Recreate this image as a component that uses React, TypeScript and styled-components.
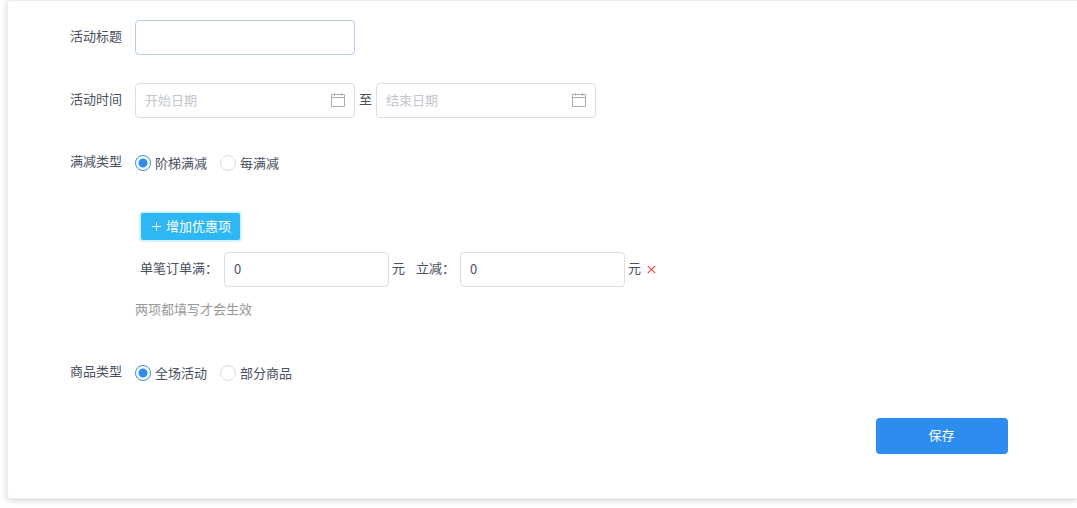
import React, { useState } from "react";
import styled, { createGlobalStyle } from "styled-components";

const GlobalStyle = createGlobalStyle`
  *, *::before, *::after { box-sizing: border-box; }
  body {
    margin: 0;
    background: #fff;
    color: #495060;
    font-family: "Noto Sans CJK SC", sans-serif;
    font-size: 13px;
    line-height: 20px;
  }
  input, button { font: inherit; color: inherit; margin: 0; }
`;

const Card = styled.form`
  margin: 0 0 8px 7px;
  padding: 19px 69px 44px 0;
  border: 1px solid #eee;
  border-right: 0;
  border-radius: 4px 0 0 4px;
  background: #fff;
  box-shadow: 0 1px 6px rgba(0, 0, 0, 0.2);
`;

const Row = styled.div<{ $gap?: number }>`
  display: grid;
  grid-template-columns: 114px minmax(0, 1fr);
  column-gap: 13px;
  margin-bottom: ${(p) => p.$gap ?? 28}px;
`;

const Label = styled.label`
  line-height: 32px;
  text-align: right;
`;

const Controls = styled.div`
  display: flex;
  align-items: flex-start;
`;

const TextBox = styled.input<{ $width: number; $active?: boolean }>`
  width: ${(p) => p.$width}px;
  height: 35px;
  padding: 0 9px 2px;
  border: 1px solid ${(p) => (p.$active ? "#b3cde6" : "#dddee1")};
  border-radius: 4px;
  background: #fff;
  outline: 0;
  &::placeholder { color: #c3c6cd; opacity: 1; }
`;

const DateField = styled.div`
  position: relative;
  display: flex;
`;

const CalendarMark = styled.svg`
  position: absolute;
  top: 10px;
  right: 10px;
  width: 14px;
  height: 14px;
  pointer-events: none;
`;

const Joiner = styled.span`
  width: 21px;
  line-height: 32px;
  text-align: center;
`;

const RadioGroup = styled.div`
  display: flex;
  align-items: center;
  gap: 13px;
  height: 35px;
`;

const RadioLabel = styled.label`
  display: flex;
  align-items: center;
  gap: 4px;
`;

const Radio = styled.input`
  appearance: none;
  width: 16px;
  height: 16px;
  border: 1px solid #dddee1;
  border-radius: 50%;
  background: #fff;
  &:checked {
    border-color: #2d8cf0;
    background: radial-gradient(circle, #2d8cf0 4px, #fff 5px);
  }
`;

const Discounts = styled.div`
  padding-top: 4px;
`;

const AddButton = styled.button`
  display: flex;
  align-items: center;
  gap: 5px;
  height: 27px;
  margin: 0 0 12px 6px;
  padding: 0 9px 2px 10px;
  border: 0;
  border-radius: 2px;
  background: #2db7f5;
  box-shadow: 0 0 0 2px rgba(45, 183, 245, 0.2);
  color: #fff;
`;

const DiscountLine = styled.div`
  display: flex;
  margin: 0 0 12px 5px;
  line-height: 32px;
`;

const AmountLabel = styled.label<{ $width: number }>`
  width: ${(p) => p.$width}px;
  white-space: nowrap;
`;

const Unit = styled.span<{ $after: number }>`
  margin: 0 ${(p) => p.$after}px 0 3px;
`;

const RemoveButton = styled.button`
  display: flex;
  align-items: center;
  height: 34px;
  padding: 0;
  border: 0;
  background: none;
  color: #ed3f14;
`;

const Hint = styled.p`
  margin: 0;
  color: #999;
`;

const Footer = styled.div`
  display: flex;
  justify-content: flex-end;
`;

const SaveButton = styled.button`
  width: 132px;
  height: 36px;
  padding: 0 1px 2px 0;
  border: 0;
  border-radius: 4px;
  background: #2d8cf0;
  color: #fff;
`;

function Calendar() {
  return (
    <CalendarMark viewBox="0 0 14 14" fill="none" stroke="#a9adb7" aria-hidden="true">
      <path d="M.5 1.5h13v12H.5zM.5 4.5h13" />
      <path d="M3.5 0v3M10.5 0v3" strokeOpacity=".7" />
    </CalendarMark>
  );
}

type Choice = { name: string; title: string; options: string[] };

function Choices({ name, title, options }: Choice) {
  const [value, setValue] = useState(options[0]);
  return (
    <RadioGroup role="radiogroup" aria-label={title}>
      {options.map((option) => (
        <RadioLabel key={option}>
          <Radio type="radio" name={name} checked={value === option} onChange={() => setValue(option)} />
          {option}
        </RadioLabel>
      ))}
    </RadioGroup>
  );
}

export default function App() {
  return (
    <>
      <GlobalStyle />
      <Card onSubmit={(e) => e.preventDefault()}>
        <Row>
          <Label htmlFor="title">活动标题</Label>
          <Controls>
            <TextBox id="title" $width={220} $active />
          </Controls>
        </Row>
        <Row $gap={27}>
          <Label htmlFor="start">活动时间</Label>
          <Controls>
            <DateField>
              <TextBox id="start" $width={220} placeholder="开始日期" />
              <Calendar />
            </DateField>
            <Joiner>至</Joiner>
            <DateField>
              <TextBox aria-label="结束日期" $width={220} placeholder="结束日期" />
              <Calendar />
            </DateField>
          </Controls>
        </Row>
        <Row $gap={29}>
          <Label as="span">满减类型</Label>
          <Choices name="reduction" title="满减类型" options={["阶梯满减", "每满减"]} />
        </Row>
        <Row $gap={36}>
          <span />
          <Discounts>
            <AddButton type="button">
              <svg width="10" height="10" viewBox="0 0 10 10" stroke="#fff" aria-hidden="true">
                <path d="M1 5.5h9M5.5 1v9" />
              </svg>
              增加优惠项
            </AddButton>
            <DiscountLine>
              <AmountLabel htmlFor="threshold" $width={84}>单笔订单满：</AmountLabel>
              <TextBox id="threshold" $width={165} defaultValue="0" />
              <Unit $after={11}>元</Unit>
              <AmountLabel htmlFor="reduce" $width={44}>立减：</AmountLabel>
              <TextBox id="reduce" $width={165} defaultValue="0" />
              <Unit $after={6}>元</Unit>
              <RemoveButton type="button" aria-label="删除">
                <svg width="9" height="9" viewBox="0 0 9 9" stroke="#ff4040" strokeWidth="1.2" aria-hidden="true">
                  <path d="M.8.8l7.4 7.4M8.2.8L.8 8.2" />
                </svg>
              </RemoveButton>
            </DiscountLine>
            <Hint>两项都填写才会生效</Hint>
          </Discounts>
        </Row>
        <Row $gap={28}>
          <Label as="span">商品类型</Label>
          <Choices name="goods" title="商品类型" options={["全场活动", "部分商品"]} />
        </Row>
        <Footer>
          <SaveButton type="submit">保存</SaveButton>
        </Footer>
      </Card>
    </>
  );
}
